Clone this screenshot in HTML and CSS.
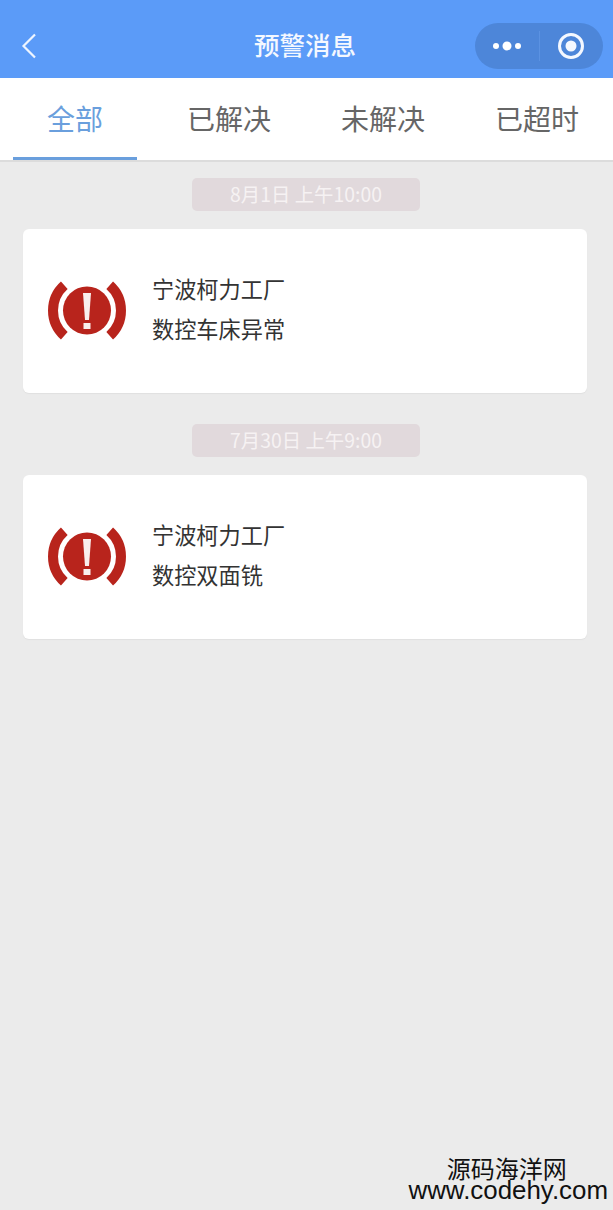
FILE: index.html
```html
<!DOCTYPE html>
<html lang="zh">
<head>
<meta charset="utf-8">
<title>预警消息</title>
<link rel="stylesheet" href="styles.css">
</head>
<body>
<header class="navbar">
  <svg class="back" viewBox="0 0 16 26"><path d="M14 1.5 2.5 13 14 24.5"/></svg>
  <h1 class="title">预警消息</h1>
  <div class="capsule">
    <svg class="more" viewBox="0 0 34 12"><circle cx="5" cy="6" r="3"/><circle cx="16" cy="6" r="4.5"/><circle cx="27" cy="6" r="3"/></svg>
    <span class="divider"></span>
    <svg class="target" viewBox="0 0 28 28"><circle class="ring" cx="14" cy="14" r="11.5"/><circle cx="14" cy="14" r="5.5"/></svg>
  </div>
</header>
<nav class="tabs">
  <div class="tab active">全部</div>
  <div class="tab">已解决</div>
  <div class="tab">未解决</div>
  <div class="tab">已超时</div>
</nav>
<main class="list">
  <section class="group">
    <div class="time">8月1日 上午10:00</div>
    <article class="card">
      <svg class="alert" viewBox="0 0 80 60"><path class="arc" d="M17.3 4.2A34 34 0 0 0 17.3 54.8"/><path class="arc" d="M62.7 4.2A34 34 0 0 1 62.7 54.8"/><circle class="disc" cx="40" cy="29.5" r="24"/><path class="mark" d="M36 12h8l-2 27h-4z"/><rect class="mark" x="36.5" y="42" width="7" height="6"/></svg>
      <div class="info"><p>宁波柯力工厂</p><p>数控车床异常</p></div>
    </article>
  </section>
  <section class="group">
    <div class="time">7月30日 上午9:00</div>
    <article class="card">
      <svg class="alert" viewBox="0 0 80 60"><path class="arc" d="M17.3 4.2A34 34 0 0 0 17.3 54.8"/><path class="arc" d="M62.7 4.2A34 34 0 0 1 62.7 54.8"/><circle class="disc" cx="40" cy="29.5" r="24"/><path class="mark" d="M36 12h8l-2 27h-4z"/><rect class="mark" x="36.5" y="42" width="7" height="6"/></svg>
      <div class="info"><p>宁波柯力工厂</p><p>数控双面铣</p></div>
    </article>
  </section>
</main>
<div class="watermark">
  <div class="wm-cn">源码海洋网</div>
  <div class="wm-en">www.codehy.com</div>
</div>
</body>
</html>
```
FILE: styles.css
```css
* { box-sizing: border-box; }
html, body { margin: 0; height: 100%; }
body {
  position: relative;
  height: 1210px;
  overflow: hidden;
  background: #ebebeb;
  font-family: "Noto Sans CJK SC", "Liberation Sans", sans-serif;
}
.navbar {
  position: relative;
  display: flex;
  align-items: center;
  justify-content: center;
  height: 78px;
  padding-top: 10px;
  background: #5b9bf8;
}
.title {
  margin: 0 0 0 -3px;
  font-size: 25.5px;
  line-height: 36px;
  font-weight: 500;
  color: #f4f8ff;
}
.back {
  position: absolute;
  left: 21px;
  top: 33px;
  width: 16px;
  height: 26px;
  fill: none;
  stroke: #eef5ff;
  stroke-width: 2.2;
}
.capsule {
  position: absolute;
  left: 475px;
  top: 23px;
  width: 128px;
  height: 46px;
  display: flex;
  align-items: center;
  border-radius: 23px;
  background: #4d86d9;
}
.more {
  width: 34px;
  height: 12px;
  margin-left: 16px;
  fill: #fff;
}
.divider {
  width: 1px;
  height: 30px;
  margin-left: 14px;
  background: #5b92e2;
}
.target {
  width: 28px;
  height: 28px;
  margin-left: 17px;
  fill: #f4f8ff;
}
.target .ring {
  fill: none;
  stroke: #f4f8ff;
  stroke-width: 3;
}
.tabs {
  display: flex;
  gap: 30px;
  height: 84px;
  padding-left: 13px;
  background: #fff;
  border-bottom: 2px solid #dcdcdc;
}
.tab {
  width: 124px;
  height: 82px;
  padding-top: 20px;
  text-align: center;
  font-size: 28px;
  line-height: 40px;
  color: #666;
}
.tab.active {
  color: #6a9fdd;
  border-bottom: 3px solid #6a9fdd;
}
.list {
  display: flex;
  flex-direction: column;
  gap: 31px;
  padding: 16px 26px 0 23px;
}
.group {
  display: flex;
  flex-direction: column;
  align-items: center;
  gap: 18px;
}
.time {
  width: 228px;
  height: 33px;
  margin-left: 2px;
  border-radius: 5px;
  background: #e1d9dc;
  color: #f6f2f3;
  font-size: 19.4px;
  line-height: 31px;
  text-align: center;
}
.card {
  display: flex;
  align-items: center;
  gap: 25px;
  width: 100%;
  height: 164px;
  padding-left: 24px;
  border-radius: 6px;
  background: #fff;
  box-shadow: 0 1px 1px #e0e0e0;
}
.alert {
  flex: none;
  width: 80px;
  height: 60px;
}
.alert .arc {
  fill: none;
  stroke: #b8241c;
  stroke-width: 10;
}
.alert .disc { fill: #b8241c; }
.alert .mark { fill: #f9efed; }
.info {
  padding-bottom: 6px;
}
.info p {
  margin: 0;
  font-size: 22.2px;
  line-height: 40px;
  color: #333;
}
.watermark {
  position: absolute;
  right: 5px;
  bottom: 9px;
  text-align: center;
  color: #111;
}
.wm-cn {
  margin-bottom: 2px;
  padding-right: 3px;
  font-size: 24px;
  line-height: 21px;
}
.wm-en {
  font-family: "Liberation Sans", sans-serif;
  font-size: 25.9px;
  line-height: 21px;
}
```
